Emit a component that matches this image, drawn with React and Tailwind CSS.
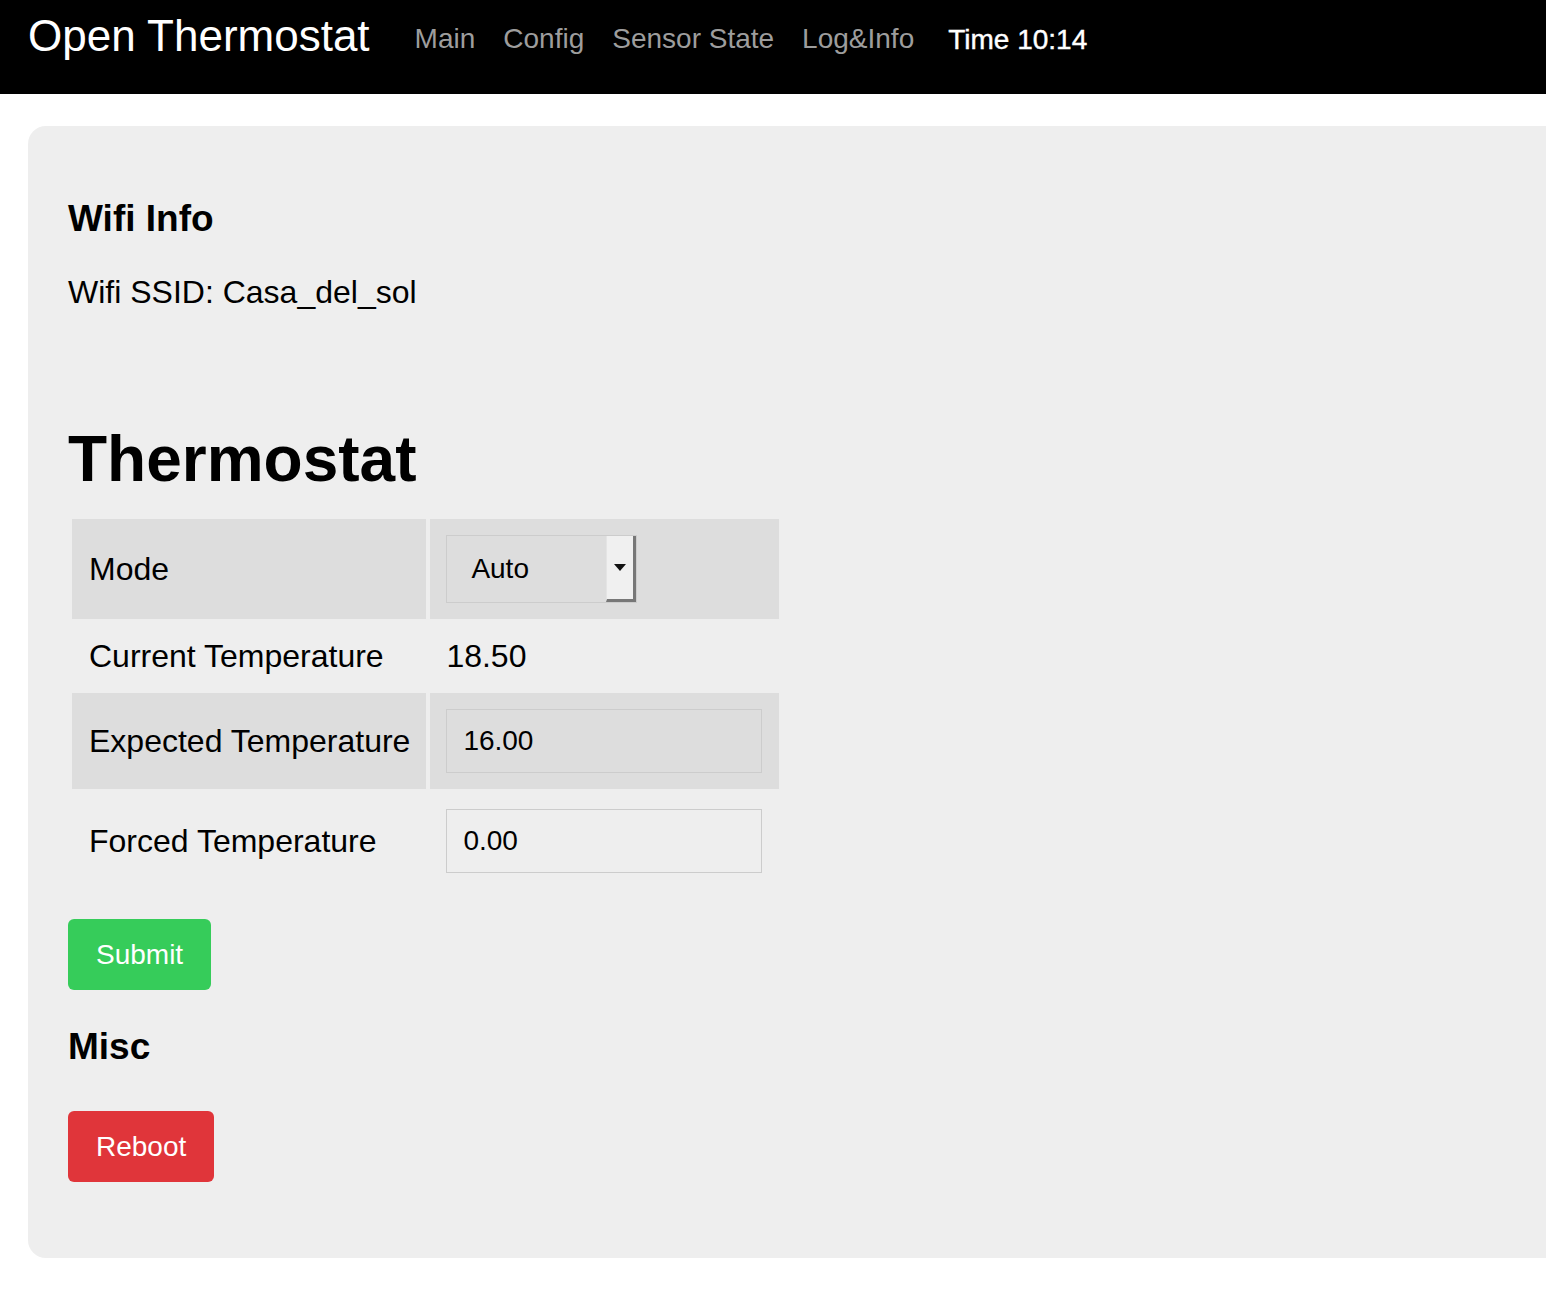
import React from "react";
import { useState } from "react";

function Header() {
  return (
    <div className="bg-black h-[94px] flex items-start px-[28px] pt-[14px]">
      <a className="text-white text-[44px] leading-none">Open Thermostat</a>
      <ul className="flex gap-[28px] ml-[45px] mt-[11px] text-[28px] leading-none text-[#9d9d9d]">
        <li>Main</li>
        <li>Config</li>
        <li>Sensor State</li>
        <li>Log&amp;Info</li>
      </ul>
      <div className="ml-[34px] mt-[12px] text-[28px] leading-none text-white [-webkit-text-stroke:0.4px_white]">
        Time 10:14
      </div>
    </div>
  );
}

function ModeSelect() {
  const [mode, setMode] = useState("Auto");
  return (
    <div className="relative w-[191px] h-[68px]">
      <select
        value={mode}
        onChange={(e) => setMode(e.target.value)}
        className="appearance-none w-full h-full bg-transparent border border-[#cccccc] pl-[24px] text-[28px] text-black outline-none"
      >
        <option>Auto</option>
        <option>Manual</option>
        <option>Off</option>
      </select>
      <div className="absolute right-[1px] top-[1px] bottom-[1px] w-[30px] bg-[#f0f0f0] border-l border-l-[#e4e4e4] border-r-[3px] border-b-[3px] border-r-[#777777] border-b-[#777777] flex items-center justify-center pointer-events-none">
        <svg width="12" height="7" viewBox="0 0 12 7">
          <path d="M0 0 L12 0 L6 7 Z" fill="#111" />
        </svg>
      </div>
    </div>
  );
}

function Field({ value }) {
  const [val, setVal] = useState(value);
  return (
    <input
      value={val}
      onChange={(e) => setVal(e.target.value)}
      className="w-[316px] h-[64px] border border-[#cccccc] bg-transparent pl-[16px] text-[28px] text-black outline-none"
    />
  );
}

function App() {
  return (
    <div className="min-h-[1310px] bg-white font-['Liberation_Sans',Arial,sans-serif] text-black">
      <Header />

      <div className="ml-[28px] mt-[32px] bg-[#eeeeee] rounded-l-[18px] pl-[40px] pt-[74px] pb-[76px]">
        {/* WIFI */}
        <h3 className="text-[37px] font-bold leading-none">Wifi Info</h3>
        <p className="text-[32px] leading-none mt-[39px]">Wifi SSID: Casa_del_sol</p>

        {/* THERMOSTAT */}
        <h1 className="text-[64px] font-bold leading-none mt-[119px]">Thermostat</h1>

        <table className="border-separate border-spacing-[4px] mt-[24px] text-[32px] leading-none whitespace-nowrap">
          <tbody>
            <tr className="bg-[#dddddd]">
              <td className="w-[354px] pl-[17px] pr-[16px] py-[16px] align-middle">Mode</td>
              <td className="w-[349px] pl-[16px] pr-[16px] py-[16px] align-middle">
                <ModeSelect />
              </td>
            </tr>
            <tr>
              <td className="pl-[17px] pr-[16px] h-[66px] align-middle">Current Temperature</td>
              <td className="pl-[16px] pr-[16px] h-[66px] align-middle">18.50</td>
            </tr>
            <tr className="bg-[#dddddd]">
              <td className="pl-[17px] pr-[16px] py-[16px] align-middle">Expected Temperature</td>
              <td className="pl-[16px] pr-[16px] py-[16px] align-middle">
                <Field value="16.00" />
              </td>
            </tr>
            <tr>
              <td className="pl-[17px] pr-[16px] py-[16px] align-middle">Forced Temperature</td>
              <td className="pl-[16px] pr-[16px] py-[16px] align-middle">
                <Field value="0.00" />
              </td>
            </tr>
          </tbody>
        </table>

        <button className="mt-[26px] bg-[#36cc5a] text-white text-[28px] leading-none px-[28px] h-[71px] rounded-[6px]">
          Submit
        </button>

        {/* MISC */}
        <h3 className="text-[37px] font-bold leading-none mt-[38px]">Misc</h3>
        <button className="block mt-[46px] bg-[#e0353a] text-white text-[28px] leading-none px-[28px] h-[71px] rounded-[6px]">
          Reboot
        </button>
      </div>
    </div>
  );
}

export default App;
